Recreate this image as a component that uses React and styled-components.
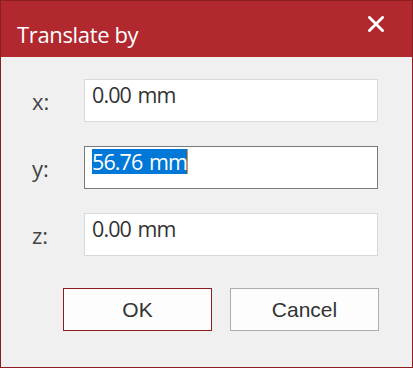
import React from "react";
import styled, { createGlobalStyle } from "styled-components";

const GlobalStyle = createGlobalStyle`
  html, body { margin: 0; padding: 0; background: #f0f0f0; }
  * { box-sizing: border-box; }
`;

const Dialog = styled.div`
  width: 413px;
  height: 368px;
  border: 1px solid #8c1d21;
  background: #f0f0f0;
  display: flex;
  flex-direction: column;
  font-family: "Open Sans", "Noto Sans", sans-serif;
`;

const TitleBar = styled.div`
  height: 56px;
  flex: none;
  background: #b1282f;
  display: flex;
  justify-content: space-between;
  align-items: flex-start;
  padding: 0 21px 0 16px;
`;

const Title = styled.h1`
  margin: 19px 0 0;
  font-size: 22px;
  font-weight: 400;
  line-height: 28px;
  color: #ffffff;
  letter-spacing: -0.35px;
`;

const CloseButton = styled.button`
  margin-top: 8px;
  width: 30px;
  height: 30px;
  padding: 0;
  border: none;
  background: transparent;
  display: flex;
  align-items: center;
  justify-content: center;
  cursor: pointer;
`;

const Body = styled.div`
  padding: 22px 33px 0 31px;
`;

const Form = styled.div`
  display: grid;
  grid-template-columns: 52px 294px;
  row-gap: 24px;
  align-items: center;
`;

const Label = styled.span`
  font-size: 22px;
  line-height: 28px;
  color: #444444;
`;

const Field = styled.div`
  height: 43px;
  border: 1px solid ${(p) => (p.$focused ? "#7a7a7a" : "#d9d9d9")};
  background: #ffffff;
  padding: 2px 7px 0;
  font-size: 21.5px;
  line-height: 25px;
  letter-spacing: -0.9px;
  word-spacing: 2px;
  color: #333333;
  white-space: nowrap;
`;

const Selection = styled.span`
  display: inline-block;
  height: 25px;
  line-height: 25px;
  background: #0078d7;
  color: #ffffff;
  border-right: 1px solid #f08a24;
`;

const ButtonRow = styled.div`
  display: flex;
  gap: 18px;
  margin: 32px 0 0 31px;
`;

const Button = styled.button`
  width: 150px;
  height: 43px;
  padding: 0;
  background: #fdfdfd;
  border: 1px solid ${(p) => (p.$primary ? "#8c1d21" : "#adadad")};
  font-family: "Liberation Sans", Arial, sans-serif;
  font-size: 21px;
  color: #333333;
  cursor: pointer;
`;

const CloseIcon = () => (
  <svg width="16" height="16" viewBox="0 0 16 16">
    <path
      d="M1.5 1.5 L14.5 14.5 M14.5 1.5 L1.5 14.5"
      stroke="#ffffff"
      strokeWidth="2.8"
      strokeLinecap="square"
      fill="none"
    />
  </svg>
);

export default function App() {
  return (
    <>
      <GlobalStyle />
      <Dialog>
        <TitleBar>
          <Title>Translate by</Title>
          <CloseButton aria-label="Close">
            <CloseIcon />
          </CloseButton>
        </TitleBar>
        <Body>
          <Form>
            <Label>x:</Label>
            <Field>0.00 mm</Field>
            <Label>y:</Label>
            <Field $focused>
              <Selection>56.76 mm</Selection>
            </Field>
            <Label>z:</Label>
            <Field>0.00 mm</Field>
          </Form>
          <ButtonRow>
            <Button $primary>OK</Button>
            <Button>Cancel</Button>
          </ButtonRow>
        </Body>
      </Dialog>
    </>
  );
}
